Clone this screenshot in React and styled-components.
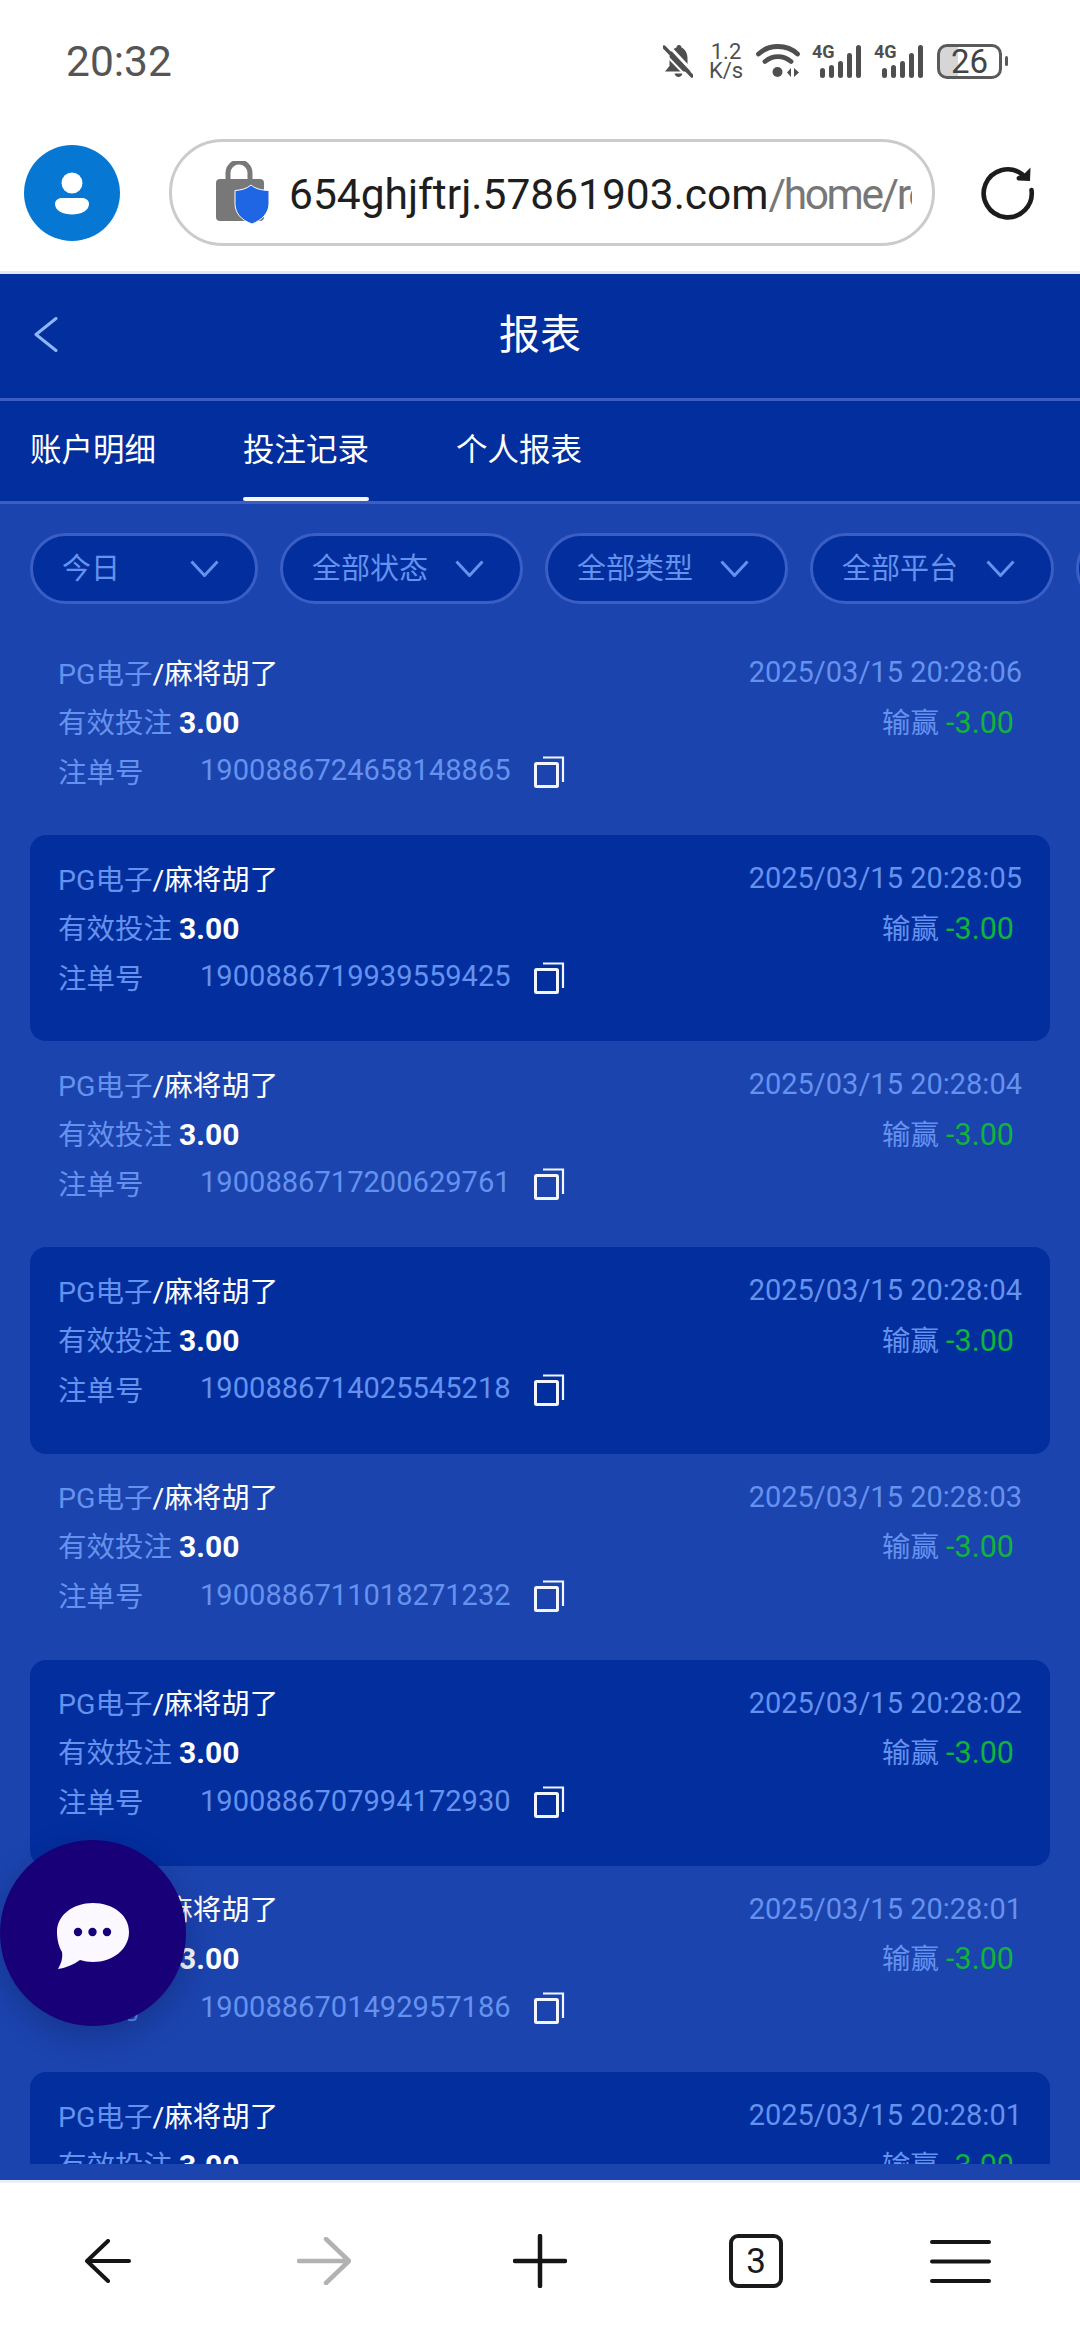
import React from "react";
import styled, { createGlobalStyle } from "styled-components";

const Global = createGlobalStyle`
  html, body { margin: 0; padding: 0; background: #fff; }
  body { font-family: Roboto, "Noto Sans CJK SC", sans-serif; }
  #root { width: 1080px; height: 2340px; }
  * { box-sizing: border-box; }
`;

const Page = styled.div`
  position: relative;
  width: 1080px;
  height: 2340px;
  display: flex;
  flex-direction: column;
  overflow: hidden;
  background: #fff;
`;

const StatusBar = styled.div`
  height: 114px;
  padding: 8px 0 0 66px;
  display: flex;
  align-items: center;
  justify-content: space-between;
`;

const Clock = styled.div`
  font-size: 42.5px;
  color: #555;
  line-height: 1;
  margin-top: 2px;
`;

const StatusIcons = styled.div`
  display: flex;
  align-items: center;
  margin-right: 78px;
`;

const Speed = styled.div`
  width: 36px;
  margin: 0 12px 0 15px;
  display: flex;
  flex-direction: column;
  align-items: center;
  color: #4f4f4f;
  font-size: 22px;
  line-height: 19px;
  white-space: nowrap;
`;

const SignalGap = styled.div`
  width: ${(p) => p.$w}px;
  flex: none;
`;

const Battery = styled.div`
  position: relative;
  width: 65px;
  height: 35px;
  margin-left: 13px;
  border: 3px solid #5a5a5a;
  border-radius: 10px;
  background: linear-gradient(90deg, #d6d6d6 0 30%, #fff 30% 100%);
  color: #444;
  font-size: 33px;
  line-height: 29px;
  text-align: center;
  &::after {
    content: "";
    position: absolute;
    right: -9px;
    top: 9px;
    width: 3px;
    height: 10px;
    border-radius: 2px;
    background: #5a5a5a;
  }
`;

const BrowserBar = styled.div`
  height: 160px;
  padding: 0 43px 0 24px;
  display: flex;
  align-items: center;
  border-bottom: 3px solid #e3e9f3;
`;

const UrlPill = styled.div`
  flex: none;
  width: 766px;
  height: 107px;
  margin-left: 49px;
  margin-right: 44px;
  padding: 0 20px 0 44px;
  display: flex;
  align-items: center;
  gap: 19px;
  border: 3px solid #cbcbcb;
  border-radius: 54px;
  overflow: hidden;
`;

const UrlText = styled.div`
  flex: 1;
  min-width: 0;
  overflow: hidden;
  white-space: nowrap;
  font-size: 42.5px;
  color: #1e1e1e;
  line-height: 1.2;
  padding-top: 4px;
  span { color: #777; letter-spacing: -2.4px; }
`;

const Header = styled.div`
  position: relative;
  height: 127px;
  background: #032e9e;
  border-bottom: 3px solid #3a5ec4;
  display: flex;
  align-items: center;
  justify-content: center;
  color: #fff;
  font-size: 41px;
  padding-bottom: 11px;
`;

const BackBtn = styled.div`
  position: absolute;
  left: 34px;
  top: 43px;
  display: flex;
`;

const Tabs = styled.div`
  height: 103px;
  background: #032e9e;
  border-bottom: 3px solid #3a5ec4;
  padding-left: 30px;
  display: flex;
  gap: 87px;
`;

const Tab = styled.div`
  position: relative;
  height: 100px;
  padding-bottom: 9px;
  display: flex;
  align-items: center;
  color: #fff;
  font-size: 31.5px;
  &::after {
    content: "";
    display: ${(p) => (p.$active ? "block" : "none")};
    position: absolute;
    left: 0;
    right: 0;
    bottom: 0;
    height: 4px;
    border-radius: 2px;
    background: #f4f6fb;
  }
`;

const Main = styled.div`
  flex: 1;
  min-height: 0;
  background: #1c44ae;
  display: flex;
  flex-direction: column;
  padding: 29px 0 16px;
`;

const Filters = styled.div`
  display: flex;
  gap: 22px;
  padding-left: 30px;
  overflow: hidden;
  flex: none;
`;

const Pill = styled.div`
  flex: none;
  width: ${(p) => p.$w}px;
  height: 71px;
  padding: 0 36px 0 29px;
  display: flex;
  align-items: center;
  justify-content: space-between;
  background: #032e9e;
  border: 3px solid #3a5ec4;
  border-radius: 36px;
  color: #6492ee;
  font-size: 29px;
`;

const PillLabel = styled.span`
  margin-bottom: 5px;
`;

const List = styled.div`
  flex: 1;
  min-height: 0;
  margin: 25px 30px 0;
  overflow: hidden;
`;

const Item = styled.div`
  height: 206.17px;
  padding: 17.5px 28px 0 28px;
  border-radius: 16px;
  background: ${(p) => (p.$dark ? "#032e9e" : "transparent")};
  font-size: 28.5px;
  color: #6492ee;
`;

const Row = styled.div`
  height: 49px;
  display: flex;
  align-items: center;
  justify-content: space-between;
`;

const OrderRow = styled(Row)`
  margin-top: 1px;
`;

const White = styled.span`
  color: #fff;
`;

const DateText = styled.span`
  font-size: 29px;
  margin-top: 2px;
`;

const Amount = styled.b`
  color: #fff;
  font-weight: 700;
  font-size: 30px;
`;

const Win = styled.span`
  margin-right: 8px;
  i { font-style: normal; color: #10b33c; font-size: 30.5px; }
`;

const OrderLabel = styled.span`
  width: 142px;
`;

const OrderNo = styled.span`
  font-size: 29.1px;
  width: 333px;
`;

const OrderLeft = styled.div`
  display: flex;
  align-items: center;
`;

const BottomNav = styled.div`
  height: 160px;
  flex: none;
  border-top: 3px solid #e8eefa;
  background: #fff;
  display: grid;
  grid-template-columns: repeat(5, 216px);
  align-items: center;
  justify-items: center;
  padding-bottom: 1px;
`;

const TabCount = styled.div`
  width: 54px;
  height: 54px;
  border: 4.5px solid #1a1a1a;
  border-radius: 9px;
  display: flex;
  align-items: center;
  justify-content: center;
  font-size: 35px;
  color: #1a1a1a;
`;

const ChatFab = styled.div`
  position: absolute;
  left: 0;
  top: 1840px;
  width: 186px;
  height: 186px;
  border-radius: 50%;
  background: #170078;
  box-shadow: 0 10px 30px rgba(5, 15, 70, 0.3);
  display: flex;
  align-items: center;
  justify-content: center;
`;

const BellOff = () => (
  <svg width="30" height="34" viewBox="0 0 30 34" style={{ display: "block", flex: "none" }}>
    <path d="M16 1c-1.500 0-2.500 1-2.500 2.500C9 5 6.500 9 6.500 14v8L2 27.500h26L24.500 22v-8c0-5-2.500-9-6-10.500C18.500 2 17.500 1 16 1z" fill="#4f4f4f" />
    <path d="M11.500 29.500h8c-.5 2.200-2 3.500-4 3.500s-3.500-1.300-4-3.500z" fill="#4f4f4f" />
    <path d="M3 -1l28 30" stroke="#fff" strokeWidth="3" />
    <path d="M1 3l28 29" stroke="#4f4f4f" strokeWidth="3.400" strokeLinecap="round" />
    <path d="M-1 7l28 29" stroke="#fff" strokeWidth="2" />
  </svg>
);

const Wifi = () => (
  <svg width="46" height="36" viewBox="0 0 46 36" fill="none" style={{ display: "block", flex: "none" }}>
    <path d="M2.500 11C13 1 31 1 41.500 11" stroke="#4f4f4f" strokeWidth="4.800" strokeLinecap="round" />
    <path d="M9 18.500c8-6.500 18-6.500 26 0" stroke="#4f4f4f" strokeWidth="4.800" strokeLinecap="round" />
    <circle cx="21.500" cy="29" r="5" fill="#4f4f4f" />
    <path d="M35 25v9l-4-4.500zM38 25v9l5-4.500z" fill="#4f4f4f" />
  </svg>
);

const Signal = () => (
  <svg width="50" height="36" viewBox="0 0 50 36" style={{ display: "block", flex: "none" }}>
    <text x="0" y="15" fontFamily="Roboto, sans-serif" fontWeight="700" fontSize="18" fill="#4f4f4f">4G</text>
    <rect x="8" y="25" width="5" height="10" rx="2.500" fill="#4f4f4f" />
    <rect x="17" y="22" width="5" height="13" rx="2.500" fill="#4f4f4f" />
    <rect x="26" y="18" width="5" height="17" rx="2.500" fill="#4f4f4f" />
    <rect x="35" y="10" width="5" height="25" rx="2.500" fill="#4f4f4f" />
    <rect x="44" y="2" width="5" height="33" rx="2.500" fill="#4f4f4f" />
  </svg>
);

const Avatar = () => (
  <svg width="96" height="96" viewBox="0 0 96 96" style={{ display: "block", flex: "none" }}>
    <circle cx="48" cy="48" r="48" fill="#0678d4" />
    <circle cx="48" cy="38" r="10.500" fill="#fff" />
    <path d="M38 53h20c4 0 7 2.500 7 6 0 6.500-8 10.500-17 10.500S31 65.500 31 59c0-3.500 3-6 7-6z" fill="#fff" />
  </svg>
);

const Lock = () => (
  <svg width="54" height="64" viewBox="0 0 54 64" style={{ display: "block", flex: "none" }}>
    <path d="M12 18v-6a11 11 0 0 1 22 0v6" fill="none" stroke="#787878" strokeWidth="5" />
    <rect x="0" y="18" width="48" height="42" rx="4" fill="#787878" />
    <path d="M35 24c4 3.500 9 5 18 5.500v13C53 52 46 59 36 63 25 59 19 52 19 42.500v-13c7-.5 12-2 16-5.500z" fill="#1f66e5" stroke="#fff" strokeWidth="1" />
  </svg>
);

const Reload = () => (
  <svg width="58" height="58" viewBox="0 0 58 58" fill="none" style={{ display: "block", flex: "none" }}>
    <path d="M52.500 26A24 24 0 1 1 43 10" stroke="#1c1c1c" strokeWidth="4.600" strokeLinecap="round" />
    <path d="M51.500 3.500L51 17l-11.500-.5c-2.500-.5-2.500-3.500-.5-4.500l7-3z" fill="#1c1c1c" />
  </svg>
);

const Chevron = () => (
  <svg width="29" height="17" viewBox="0 0 29 17" fill="none" style={{ display: "block", flex: "none" }}>
    <path d="M1.500 1.500L14.500 15.500 27.500 1.500" stroke="#6492ee" strokeWidth="3" />
  </svg>
);

const Copy = () => (
  <svg width="32" height="32" viewBox="0 0 32 32" fill="none" style={{ display: "block", flex: "none", marginTop: 3 }}>
    <path d="M10 1.500h20V26" stroke="#f2f5fb" strokeWidth="2.200" />
    <rect x="2.500" y="7.500" width="22" height="23" stroke="#f2f5fb" strokeWidth="3" rx="1" />
  </svg>
);

const ArrowLeft = () => (
  <svg width="46" height="44" viewBox="0 0 46 44" fill="none" style={{ display: "block" }}>
    <path d="M23 2L2 22l21 20M2 22h42" stroke="#151515" strokeWidth="4" strokeLinecap="round" strokeLinejoin="round" />
  </svg>
);

const ArrowRight = () => (
  <svg width="54" height="48" viewBox="0 0 54 48" fill="none" style={{ display: "block" }}>
    <path d="M29 2l23 22-23 22M2 24h50" stroke="#b2b2b2" strokeWidth="4.500" strokeLinecap="round" strokeLinejoin="round" />
  </svg>
);

const Plus = () => (
  <svg width="54" height="54" viewBox="0 0 54 54" fill="none" style={{ display: "block" }}>
    <path d="M27 2v50M2 27h50" stroke="#151515" strokeWidth="4.500" strokeLinecap="round" />
  </svg>
);

const Menu = () => (
  <svg width="84" height="44" viewBox="0 0 84 44" fill="none" style={{ display: "block" }}>
    <path d="M2 3h57M2 22.500h57M2 42h57" stroke="#151515" strokeWidth="4" strokeLinecap="round" />
  </svg>
);

const Bubble = () => (
  <svg width="74" height="68" viewBox="0 0 74 68" style={{ display: "block", marginTop: 5 }}>
    <path d="M37 1c20 0 36 12 36 29S57 60 37 60c-5 0-9-1-13-2C17 63 9 66 2 67c3-5 5-11 4-17C3 45 1 38 1 30 1 13 17 1 37 1z" fill="#fbf8ff" />
    <circle cx="22" cy="30" r="4.200" fill="#170078" />
    <circle cx="36.500" cy="30" r="4.200" fill="#170078" />
    <circle cx="51" cy="30" r="4.200" fill="#170078" />
  </svg>
);

const Back = () => (
  <svg width="24" height="35" viewBox="0 0 24 35" fill="none" style={{ display: "block" }}>
    <path d="M22 1.500L2 17.500l20 16" stroke="#8db6fb" strokeWidth="3" strokeLinecap="round" strokeLinejoin="round" />
  </svg>
);

const records = [
  ["2025/03/15 20:28:06", "1900886724658148865"],
  ["2025/03/15 20:28:05", "1900886719939559425"],
  ["2025/03/15 20:28:04", "1900886717200629761"],
  ["2025/03/15 20:28:04", "1900886714025545218"],
  ["2025/03/15 20:28:03", "1900886711018271232"],
  ["2025/03/15 20:28:02", "1900886707994172930"],
  ["2025/03/15 20:28:01", "1900886701492957186"],
  ["2025/03/15 20:28:01", "1900886698120457793"],
];

const filters = [
  ["今日", 228],
  ["全部状态", 243],
  ["全部类型", 243],
  ["全部平台", 244],
  ["全部游戏", 243],
];

export default function App() {
  return (
    <Page>
      <Global />
      <StatusBar>
        <Clock>20:32</Clock>
        <StatusIcons>
          <BellOff />
          <Speed>
            <span>1.2</span>
            <span>K/s</span>
          </Speed>
          <Wifi />
          <SignalGap $w={10} />
          <Signal />
          <SignalGap $w={12} />
          <Signal />
          <Battery>26</Battery>
        </StatusIcons>
      </StatusBar>
      <BrowserBar>
        <Avatar />
        <UrlPill>
          <Lock />
          <UrlText>
            654ghjftrj.57861903.com<span>/home/report/bet</span>
          </UrlText>
        </UrlPill>
        <Reload />
      </BrowserBar>
      <Header>
        <BackBtn>
          <Back />
        </BackBtn>
        报表
      </Header>
      <Tabs>
        <Tab>账户明细</Tab>
        <Tab $active>投注记录</Tab>
        <Tab>个人报表</Tab>
      </Tabs>
      <Main>
        <Filters>
          {filters.map(([label, w]) => (
            <Pill key={label} $w={w}>
              <PillLabel>{label}</PillLabel>
              <Chevron />
            </Pill>
          ))}
        </Filters>
        <List>
          {records.map(([date, no], i) => (
            <Item key={no} $dark={i % 2 === 1}>
              <Row>
                <span>
                  PG电子<White>/麻将胡了</White>
                </span>
                <DateText>{date}</DateText>
              </Row>
              <Row>
                <span>
                  有效投注 <Amount>3.00</Amount>
                </span>
                <Win>
                  输赢 <i>-3.00</i>
                </Win>
              </Row>
              <OrderRow>
                <OrderLeft>
                  <OrderLabel>注单号</OrderLabel>
                  <OrderNo>{no}</OrderNo>
                  <Copy />
                </OrderLeft>
              </OrderRow>
            </Item>
          ))}
        </List>
      </Main>
      <BottomNav>
        <ArrowLeft />
        <ArrowRight />
        <Plus />
        <TabCount>3</TabCount>
        <Menu />
      </BottomNav>
      <ChatFab>
        <Bubble />
      </ChatFab>
    </Page>
  );
}
